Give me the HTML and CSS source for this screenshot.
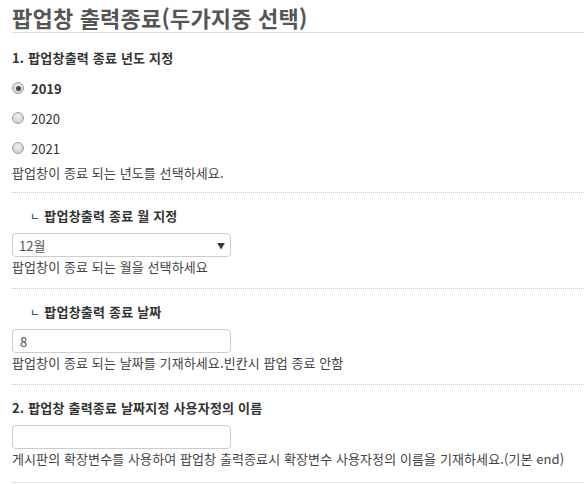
FILE: index.html
```html
<!DOCTYPE html>
<html lang="ko">
<head>
<meta charset="utf-8">
<link rel="stylesheet" href="styles.css">
</head>
<body>
<div class="page">
  <h2 class="title">팝업창 출력종료(두가지중 선택)</h2>

  <div class="field first">
    <div class="label">1. 팝업창출력 종료 년도 지정</div>
    <label class="radio-row checked"><input type="radio" name="y" checked><span>2019</span></label>
    <label class="radio-row"><input type="radio" name="y"><span>2020</span></label>
    <label class="radio-row"><input type="radio" name="y"><span>2021</span></label>
    <div class="help">팝업창이 종료 되는 년도를 선택하세요.</div>
  </div>

  <div class="field">
    <div class="label sub"><span class="mark">ㄴ</span>팝업창출력 종료 월 지정</div>
    <div class="select"><span>12월</span><span class="arrow">▼</span></div>
    <div class="help">팝업창이 종료 되는 월을 선택하세요</div>
  </div>

  <div class="field">
    <div class="label sub"><span class="mark">ㄴ</span>팝업창출력 종료 날짜</div>
    <input class="text" type="text" value="8">
    <div class="help">팝업창이 종료 되는 날짜를 기재하세요.빈칸시 팝업 종료 안함</div>
  </div>

  <div class="field last">
    <div class="label">2. 팝업창 출력종료 날짜지정 사용자정의 이름</div>
    <input class="text" type="text" value="">
    <div class="help">게시판의 확장변수를 사용하여 팝업창 출력종료시 확장변수 사용자정의 이름을 기재하세요.(기본 end)</div>
  </div>
</div>
</body>
</html>
```

FILE: styles.css
```css
html, body {
  margin: 0;
  padding: 0;
  background: #fff;
}
body {
  font-family: "Noto Sans CJK KR", "Noto Sans", sans-serif;
  color: #333;
  overflow: hidden;
}
.page {
  padding-left: 12px;
  width: 600px;
}
.title {
  margin: 0;
  height: 33px;
  box-sizing: border-box;
  font-size: 22px;
  line-height: 30px;
  padding-top: 2px;
  font-weight: 700;
  color: #555;
  border-bottom: 1px solid #ddd;
  white-space: nowrap;
  letter-spacing: 0.2px;
}
.field {
  padding: 13px 0 11px;
  border-bottom: 1px dotted #ccc;
  display: flex;
  flex-direction: column;
  align-items: flex-start;
}
.field.first {
  padding-top: 15px;
  padding-bottom: 9px;
}
.field.last {
  padding-bottom: 13px;
}
.label {
  font-size: 13px;
  line-height: 20px;
  font-weight: 700;
  color: #333;
  margin-bottom: 7px;
  white-space: nowrap;
  letter-spacing: 0.2px;
}
.first .label {
  margin-bottom: 5px;
}
.label.sub {
  padding-left: 18px;
}
.mark {
  font-weight: 400;
  font-size: 11px;
  margin-right: 4px;
}
.radio-row {
  display: flex;
  align-items: center;
  height: 30px;
  font-size: 13px;
  color: #333;
}
.radio-row input {
  -webkit-appearance: none;
  appearance: none;
  margin: 0 7px 0 0;
  width: 12px;
  height: 12px;
  border-radius: 50%;
  border: 1px solid #a0a0a0;
  background: radial-gradient(circle at 50% 35%, #f0f0f0, #c9c9c9);
  box-sizing: border-box;
  position: relative;
}
.radio-row input:checked::after {
  content: "";
  position: absolute;
  left: 2.5px;
  top: 2.5px;
  width: 5px;
  height: 5px;
  border-radius: 50%;
  background: #4a4a4a;
}
.radio-row.checked span {
  font-weight: 700;
}
.help {
  font-size: 13px;
  line-height: 20px;
  color: #444;
  white-space: nowrap;
  letter-spacing: 0.1px;
}
.select {
  width: 219px;
  height: 24px;
  box-sizing: border-box;
  border: 1px solid #ccc;
  border-radius: 4px;
  display: flex;
  align-items: center;
  justify-content: space-between;
  padding: 0 5px 0 6px;
  font-size: 13px;
  color: #555;
}
.select .arrow {
  font-size: 8px;
  color: #333;
}
.text {
  width: 219px;
  height: 24px;
  box-sizing: border-box;
  border: 1px solid #ccc;
  border-radius: 4px;
  padding: 0 7px;
  margin: 0;
  font-family: "Noto Sans CJK KR", "Noto Sans", sans-serif;
  font-size: 13px;
  color: #555;
  outline: none;
}
```
